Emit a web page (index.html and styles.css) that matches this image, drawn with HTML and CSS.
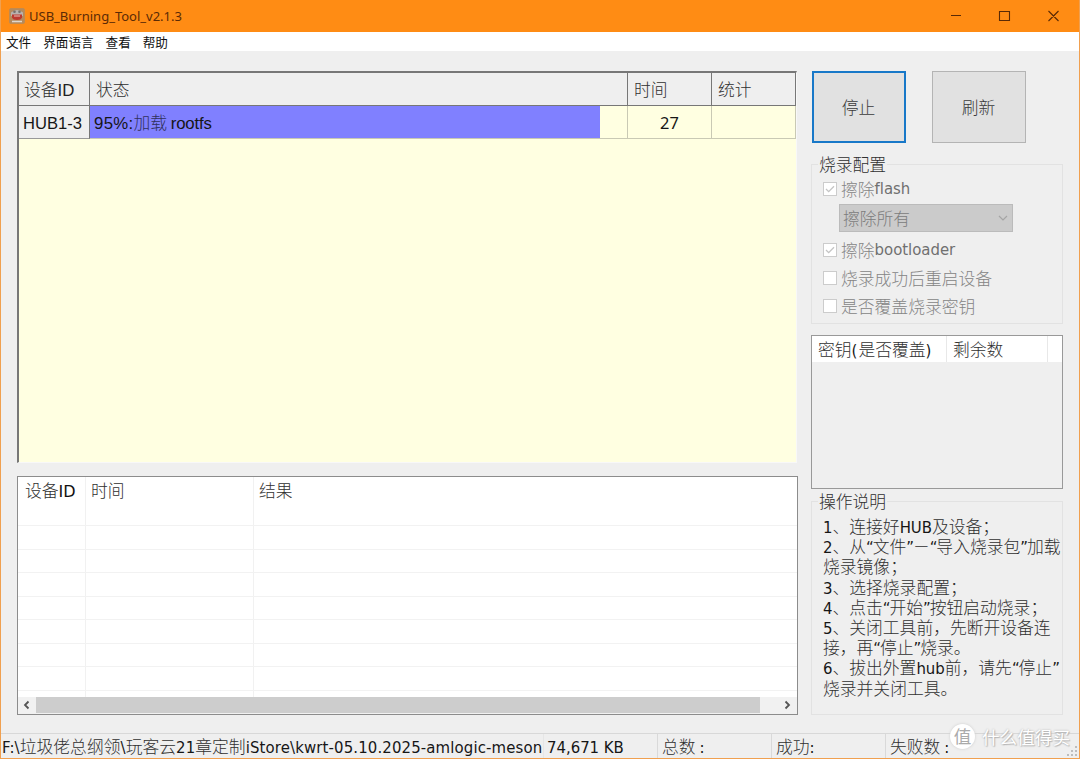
FILE: index.html
```html
<!DOCTYPE html>
<html lang="zh-CN">
<head>
<meta charset="utf-8">
<title>USB_Burning_Tool_v2.1.3</title>
<link rel="stylesheet" href="styles.css">
</head>
<body>
<div class="window">
  <header class="titlebar">
    <svg class="app-icon" width="16" height="16" viewBox="0 0 16 16"><rect x=".5" y=".5" width="15" height="15" rx="1.500" fill="#b58a5c" stroke="#c08a50"/><path d="M2 4.5Q8-.5 14 4.500V8H2z" fill="#b9b2ae"/><circle cx="5.500" cy="3.800" r="1.300" fill="#77706c"/><circle cx="10.500" cy="3.800" r="1.300" fill="#77706c"/><path d="M3 6.500h10v3Q12 12 8 12T3 9.500z" fill="#bd3a30"/><path d="M5 8h6" stroke="#e6c0b8"/><path d="M3 13.500h10" stroke="#e0d6cc" stroke-width="1.500"/></svg>
    <span class="title">USB_Burning_Tool_v2.1.3</span>
    <svg class="caption" width="110" height="14" viewBox="0 0 110 14" fill="none" stroke="#5a2a06" stroke-width="1.1"><path d="M1 6.500h10M49.500 2.500h10v9h-10zM98.500 2l10 10M108.500 2l-10 10"/></svg>
  </header>
  <nav class="menubar"><span>文件</span><span>界面语言</span><span>查看</span><span>帮助</span></nav>
  <main class="content">
    <div class="left">
      <section class="devices">
        <div class="dev-row dev-head"><div>设备<span class="arial">ID</span></div><div>状态</div><div>时间</div><div>统计</div></div>
        <div class="dev-row dev-item"><div class="hub">HUB1-3</div><div class="status"><div class="progress"><span class="pct wide">95%:</span><span class="soft">加载</span> <span class="pct">rootfs</span></div></div><div class="secs">27</div><div></div></div>
      </section>
      <section class="results">
        <div class="res-row res-head"><div>设备<span class="idb">ID</span></div><div>时间</div><div>结果</div></div>
        <div class="res-row"><div></div><div></div><div></div></div>
        <div class="res-row"><div></div><div></div><div></div></div>
        <div class="res-row"><div></div><div></div><div></div></div>
        <div class="res-row"><div></div><div></div><div></div></div>
        <div class="res-row"><div></div><div></div><div></div></div>
        <div class="res-row"><div></div><div></div><div></div></div>
        <div class="res-row"><div></div><div></div><div></div></div>
        <div class="res-row res-last"><div></div><div></div><div></div></div>
        <div class="scrollbar">
          <svg width="18" height="16" viewBox="0 0 18 16" fill="none" stroke="#555" stroke-width="1.800"><path d="M10.500 4.500L7 8l3.500 3.500"/></svg>
          <div class="thumb"></div>
          <svg width="18" height="16" viewBox="0 0 18 16" fill="none" stroke="#555" stroke-width="1.800"><path d="M6.500 4.500L10 8l-3.500 3.500"/></svg>
        </div>
      </section>
    </div>
    <aside class="right">
      <div class="buttons"><button class="btn focus">停止</button><button class="btn">刷新</button></div>
      <section class="group config">
        <h2>烧录配置</h2>
        <label class="check c1"><i class="box"><svg width="12" height="12" viewBox="0 0 12 12" fill="none" stroke="#c4c4c4" stroke-width="1.300"><path d="M2 6l2.700 2.700L10 3.300"/></svg></i>擦除<span class="lat">flash</span></label>
        <div class="select"><span>擦除所有</span><svg width="10" height="8" viewBox="0 0 10 8" fill="none" stroke="#a5a5a5" stroke-width="1.200"><path d="M1 2l4 4 4-4"/></svg></div>
        <label class="check c2"><i class="box"><svg width="12" height="12" viewBox="0 0 12 12" fill="none" stroke="#c4c4c4" stroke-width="1.300"><path d="M2 6l2.700 2.700L10 3.300"/></svg></i>擦除<span class="lat">bootloader</span></label>
        <label class="check"><i class="box"></i>烧录成功后重启设备</label>
        <label class="check"><i class="box"></i>是否覆盖烧录密钥</label>
      </section>
      <section class="keys"><div class="keys-head"><div>密钥<span class="lat paren">(</span>是否覆盖<span class="lat">)</span></div><div>剩余数</div><div></div></div></section>
      <section class="group help">
        <h2>操作说明</h2>
        <p><span class="lat">1</span>、连接好<span class="lat">HUB</span>及设备；</p>
        <p><span class="lat">2</span>、从<span class="lat q">“</span>文件<span class="lat q">”</span>－<span class="lat q">“</span>导入烧录包<span class="lat q">”</span>加载</p>
        <p>烧录镜像；</p>
        <p><span class="lat">3</span>、选择烧录配置；</p>
        <p><span class="lat">4</span>、点击<span class="lat q">“</span>开始<span class="lat q">”</span>按钮启动烧录；</p>
        <p><span class="lat">5</span>、关闭工具前，先断开设备连</p>
        <p>接，再<span class="lat q">“</span>停止<span class="lat q">”</span>烧录。</p>
        <p><span class="lat">6</span>、拔出外置<span class="lat">hub</span>前，请先<span class="lat q">“</span>停止<span class="lat q">”</span></p>
        <p>烧录并关闭工具。</p>
      </section>
    </aside>
  </main>
  <footer class="statusbar">
    <div class="path"><span class="lat">F:\</span>垃圾佬总纲领<span class="lat">\</span>玩客云<span class="lat">21</span>章定制<span class="lat">iStore\kwrt-05.10.2025-amlogic-meson</span></div>
    <div><span class="lat">74,671 KB</span></div><div>总数<span class="lat colon">:</span></div><div>成功<span class="lat">:</span></div><div>失败数<span class="lat colon">:</span></div>
  </footer>
  <svg class="grip" width="11" height="11" viewBox="0 0 11 11" fill="#bdbdbd"><path d="M8 0h2v2H8zM8 4h2v2H8zM4 4h2v2H4zM8 8h2v2H8zM4 8h2v2H4zM0 8h2v2H0z"/></svg>
  <div class="watermark"><span class="seal">值</span><span>什么值得买</span></div>
</div>
</body>
</html>
```
FILE: styles.css
```css
* { box-sizing: border-box; }
body { margin: 0; }
.window {
  position: relative;
  display: flex;
  flex-direction: column;
  width: 1080px;
  height: 759px;
  overflow: hidden;
  background: #efefef;
  border: 1px solid #f0a050;
  border-top: 0;
  font: 16.8px/20px "Noto Sans CJK SC", sans-serif;
  font-weight: 300;
  color: #303030;
  white-space: nowrap;
}
.lat { font-family: "DejaVu Sans Condensed", "DejaVu Sans", sans-serif; font-stretch: condensed; font-size: 16.6px; letter-spacing: -0.02px; color: #161616; }
.q { letter-spacing: -1.1px; }
.titlebar {
  flex: none;
  display: flex;
  align-items: center;
  height: 32px;
  margin: 0 -1px;
  padding: 0 20px 0 9px;
  background: #ff8c14;
}
.title { margin-left: 4px; font: 13px "Noto Sans", sans-serif; color: #5a2a06; }
.caption { margin-left: auto; }
.menubar {
  flex: none;
  display: flex;
  gap: 12px;
  height: 19px;
  padding-left: 5px;
  background: #fff;
  font-size: 12.6px;
  font-weight: 400;
  line-height: 20px;
  color: #111;
}
.content { display: flex; gap: 13px; height: 682px; padding: 20px 0 0 16px; }
.left { width: 781px; }
.devices {
  width: 780px;
  height: 392px;
  background: #ffffe1;
  border-top: 2px solid #777;
  border-left: 2px solid #777;
  border-right: 1px solid #f8f8f8;
  border-bottom: 1px solid #f8f8f8;
}
.dev-row { display: grid; grid-template-columns: 71px 538px 84px 84px; }
.dev-head { height: 33px; background: #efefef; }
.dev-head > div { padding: 6px 0 0 6px; border-right: 1px solid #777; border-bottom: 1px solid #777; }
.dev-head > div:first-child { padding-left: 5px; }
.dev-item { height: 33px; color: #161616; }
.dev-item > div { border-right: 1px solid #c9c9b4; border-bottom: 1px solid #c9c9b4; }
.arial { font-family: "Liberation Sans", sans-serif; color: #222; }
.dev-item .hub { padding: 8px 0 0 4px; font-family: "Liberation Sans", sans-serif; font-size: 16.6px; background: #efefef; border-right-color: #777; border-bottom-color: #999; }
.progress { width: 510px; height: 32px; padding: 6px 0 0 4px; background: #8080ff; }
.pct { font-family: "Liberation Sans", sans-serif; font-size: 16.8px; letter-spacing: -0.15px; }
.wide { letter-spacing: 0.3px; }
.soft { color: #30305c; }
.dev-item .secs { padding-top: 7px; text-align: center; font: 16.4px/20px "Noto Sans", sans-serif; }
.results { height: 239px; margin-top: 13px; background: #fff; border: 1px solid #8c8c8c; overflow: hidden; }
.res-row { display: grid; grid-template-columns: 68px 168px 1fr; height: 23.5px; border-bottom: 1px solid #f2f2f2; }
.res-row > div { border-right: 1px solid #f1f1f1; }
.res-row > div:last-child { border: 0; }
.res-head { height: 49px; }
.res-head > div { padding: 3px 0 0 5px; }
.res-head > div:first-child { padding-left: 7px; }
.idb { font: 16px/20px "DejaVu Sans", sans-serif; color: #111; }
.res-last { height: 6px; border: 0; }
.scrollbar { display: flex; height: 17px; background: #f1f1f1; }
.thumb { flex: none; width: 724px; height: 16px; background: #cdcdcd; margin-right: auto; }
.right { width: 252px; }
.buttons { display: flex; gap: 26px; padding-left: 1px; }
.btn { width: 94px; height: 72px; padding: 0 1px 0 0; background: #e1e1e1; border: 1px solid #b4b4b4; font: inherit; color: #3a3a3a; }
.focus { border: 2px solid #1878c8; }
.group { border: 1px solid #e2e2e2; }
.group h2 { width: max-content; margin: -11px 0 0 6px; padding: 0 1px; background: #efefef; font: inherit; }
.config { height: 160px; margin-top: 21px; padding-left: 11px; color: #858585; }
.config h2 { margin-left: -5px; color: #303030; }
.config .lat { color: #707070; }
.check { display: flex; align-items: center; height: 28px; }
.c1 { height: 30px; }
.c2 { height: 28px; margin-top: 4px; }
.box { width: 14px; height: 14px; margin-right: 4px; background: #fff; border: 1px solid #ccc; display: flex; flex: none; }
.select { display: flex; align-items: center; justify-content: space-between; width: 174px; height: 28px; margin: 0 0 0 16px; padding: 0 4px 0 3px; background: #cbcbcb; border: 1px solid #bbb; color: #7c7c7c; }
.keys { height: 154px; margin-top: 11px; border: 1px solid #999; }
.keys-head { display: grid; grid-template-columns: 135px 101px 14px; height: 26px; background: #fff; }
.keys-head > div { height: 26px; padding: 3px 0 0 6px; border-right: 1px solid #e8e8e8; }
.keys-head > div:last-child { border: 0; }
.paren { letter-spacing: 1px; }
.help { height: 214px; margin-top: 12px; }
.help h2 { margin-bottom: 5px; }
.help p { height: 20.2px; margin: 0 0 0 11px; line-height: 20px; }
.statusbar { display: grid; grid-template-columns: 542px 114px 114px 114px 1fr; height: 25px; border-top: 1px solid #d8d8d8; }
.statusbar > div { height: 24px; padding: 2px 0 0 4px; border-left: 1px solid #d9d9d9; overflow: hidden; }
.statusbar > .path { padding-left: 1px; border: 0; }
.path .lat { letter-spacing: 0.13px; }
.statusbar > .path + div { padding-left: 3px; border-color: #e6e6e6; }
.colon { margin-left: 4px; }
.grip { position: absolute; right: 1px; bottom: 1px; }
.watermark { position: absolute; left: 949px; top: 724px; display: flex; align-items: center; gap: 7px; color: #fff; font-size: 17.6px; font-weight: 400; text-shadow: 0 0 2px #aaa, 1px 1px 1px #bbb; }
.seal { width: 25px; height: 25px; border-radius: 50%; background: #fff; box-shadow: 0 0 3px #ccc; text-align: center; line-height: 24px; color: #aaa; text-shadow: none; }
```
